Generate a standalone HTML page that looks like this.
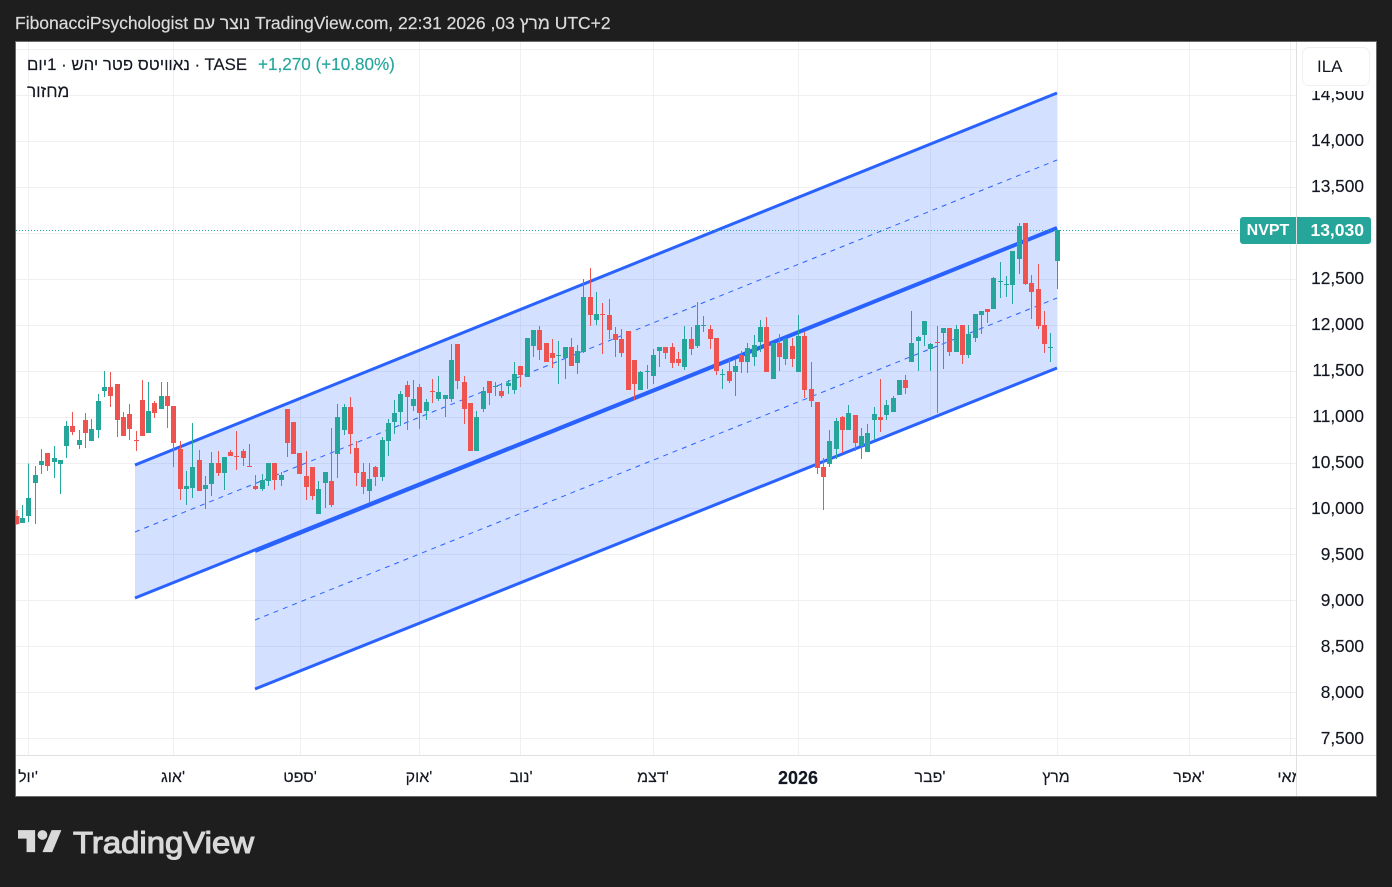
<!DOCTYPE html>
<html lang="he"><head><meta charset="utf-8"><title>NVPT</title>
<style>
html,body{margin:0;padding:0;width:1392px;height:887px;overflow:hidden;background:#1e1e1e}
body{position:relative;font-family:"Liberation Sans","Noto Sans CJK JP",sans-serif}
svg{position:absolute;left:0;top:0}
.t{position:absolute;white-space:pre}
#title{left:15px;top:13px;font-size:17.5px;line-height:20px;color:#dbdbdb;-webkit-text-stroke:.2px #dbdbdb}
.leg{font-size:16.8px;line-height:20px;color:#131722;-webkit-text-stroke:.15px #131722}
.p{position:absolute;left:1296px;width:68px;text-align:right;font-size:17.3px;line-height:20px;color:#131722;-webkit-text-stroke:.15px #131722}
.x{position:absolute;top:768px;width:100px;text-align:center;font-size:16px;line-height:20px;color:#131722;-webkit-text-stroke:.15px #131722}
#cover{position:absolute;left:1297px;top:42px;width:79px;height:49px;background:#fff}
#btn{position:absolute;left:1302px;top:47px;width:66px;height:37px;background:#fff;border:1.5px solid #f0f0f0;border-radius:7px;font-size:17px;line-height:37px;color:#131722;text-indent:14px}
#tag1{position:absolute;left:1240px;top:217px;width:56px;height:27px;background:#26a69a;border-radius:3px 0 0 3px;color:#fff;font-size:16px;font-weight:bold;line-height:27px;text-align:center}
#tag2{position:absolute;left:1297px;top:217px;width:74px;height:27px;background:#26a69a;border-radius:0 3px 3px 0;color:#fff;font-size:17.5px;font-weight:bold;line-height:27px;text-align:right}
#tag2 span{margin-right:7px}
#clip{position:absolute;left:16px;top:760px;width:1280px;height:36px;overflow:hidden}
#clip .x{top:8px}
</style></head><body>
<svg width="1392" height="887" viewBox="0 0 1392 887" xmlns="http://www.w3.org/2000/svg">
<defs><clipPath id="c"><rect x="16" y="42" width="1280" height="713"/></clipPath></defs>
<rect x="15.5" y="41.5" width="1361" height="755" fill="#fff" stroke="#6a6a6a"/>
<g stroke="#f0f0f0" stroke-width="1" fill="none" shape-rendering="crispEdges">
<path d="M16 49.5H1296M16 95.5H1296M16 141.5H1296M16 187.5H1296M16 233.5H1296M16 279.5H1296M16 325.5H1296M16 371.5H1296M16 417.5H1296M16 463.5H1296M16 508.5H1296M16 554.5H1296M16 600.5H1296M16 646.5H1296M16 692.5H1296M16 738.5H1296"/>
<path d="M28.5 42V755M173.5 42V755M300.5 42V755M419.5 42V755M520.5 42V755M653.5 42V755M798.5 42V755M930.5 42V755M1057.5 42V755M1189.5 42V755M1290.5 42V755"/>
</g>
<path d="M1296.5 42V796M16 755.5H1376" stroke="#e0e0e0" stroke-width="1" fill="none" shape-rendering="crispEdges"/>
<polygon points="135,465 1057,93 1057,228 135,598" fill="#2962ff" fill-opacity=".2"/>
<polygon points="255,551 1057,228 1057,368 255,689" fill="#2962ff" fill-opacity=".2"/>
<g stroke="#2962ff" fill="none">
<path d="M135 465L1057 93M135 598L1057 228M255 689L1057 368" stroke-width="3"/>
<path d="M255 551L1057 228" stroke-width="4"/>
<path d="M135 532L1057 160M255 620L1057 298" stroke-width="1" stroke-dasharray="5 5"/>
</g>
<path d="M16 230.5H1240" stroke="#26a69a" stroke-width="1" stroke-dasharray="1 2" fill="none" shape-rendering="crispEdges"/>
<g clip-path="url(#c)" fill="none" shape-rendering="crispEdges">
<g transform="translate(.1667 360) scale(.33333)">
<path stroke="#26a69a" stroke-width="3" d="M67 435V489M85 310V486M106 318V492M124 267V342M163 258V354M181 300V402M199 183V294M238 210V267M274 177V243M295 102V234M313 33V111M445 66V219M484 66V147M559 333V435M577 189V414M616 348V447M634 276V408M673 291V390M787 342V393M805 309V378M844 336V378"/>
<path stroke="#26a69a" stroke-width="15" d="M67 474V489M85 414V468M106 345V369M124 303V315M163 294V306M181 300V312M199 198V258M238 240V255M274 207V243M295 123V210M313 81V93M445 153V219M484 108V147M559 378V387M577 321V384M616 375V387M634 309V372M673 291V339M787 360V387M805 309V363M844 345V360"/>
<path stroke="#ef5350" stroke-width="3" d="M51 450V495M142 279V333M217 156V225M256 159V264M331 36V141M352 72V231M370 156V228M388 132V240M409 213V273M427 60V228M463 123V174M502 66V204M520 138V321M541 243V420M598 270V393M655 273V348M691 270V288M709 213V330M730 267V318M748 252V321M766 345V390M823 309V390M862 147V291M880 186V282M898 279V342"/>
<path stroke="#ef5350" stroke-width="15" d="M51 468V492M142 279V318M217 198V216M256 180V219M331 81V108M352 72V180M370 171V228M388 162V207M409 240V243M427 120V228M463 129V159M502 108V138M520 138V249M541 267V387M598 300V393M655 309V339M691 276V288M709 288V291M730 273V294M748 318V321M766 378V387M823 309V360M862 147V249M880 186V282M898 279V342"/>
</g>
<g transform="translate(280.1667 330) scale(.33333)">
<path stroke="#26a69a" stroke-width="3" d="M115 453V552M136 426V534M172 222V444M193 222V315M268 399V519M307 321V453M325 267V378M343 210V312M361 183V288M400 150V243M439 207V270M475 138V213M496 195V261M514 42V216M589 243V363M610 171V246M646 156V198M685 150V192M703 96V192M742 24V141M760 0V81M835 33V162M856 51V147M892 45V132"/>
<path stroke="#26a69a" stroke-width="15" d="M115 477V552M136 426V459M172 261V372M193 231V300M268 447V483M307 330V441M325 279V333M343 249V276M361 192V246M400 207V228M439 216V243M475 186V207M496 195V207M514 90V207M589 261V363M610 183V237M646 168V171M685 159V168M703 132V180M742 24V141M760 0V48M835 75V78M856 51V84M892 63V99"/>
<path stroke="#ef5350" stroke-width="3" d="M79 363V510M97 411V510M154 294V531M211 201V372M229 333V468M250 399V492M286 408V468M382 153V300M418 162V297M457 147V219M532 42V177M553 138V282M571 219V363M628 153V225M664 159V204M721 108V171M778 -12V90M799 39V96M817 27V114M874 24V108"/>
<path stroke="#ef5350" stroke-width="15" d="M79 438V471M97 411V498M154 453V525M211 231V312M229 354V429M250 426V471M286 411V441M382 165V201M418 171V249M457 183V186M532 42V153M553 156V237M571 219V363M628 153V189M664 183V198M721 108V135M778 0V60M799 39V96M817 69V84M874 51V108"/>
</g>
<g transform="translate(520.1667 260) scale(.33333)">
<path stroke="#26a69a" stroke-width="3" d="M190 57V279M229 96V195M361 333V390M382 315V387M400 267V372M418 261V321M493 198V330M532 126V264M550 168V216M607 327V387M646 297V408M682 249V339M703 225V318M721 180V276M760 249V357M796 234V315"/>
<path stroke="#26a69a" stroke-width="15" d="M190 111V276M229 162V180M361 336V390M382 333V336M400 285V348M418 261V273M493 237V321M532 195V258M550 195V198M607 342V345M646 318V336M682 264V306M703 255V291M721 201V246M760 249V357M796 237V297"/>
<path stroke="#ef5350" stroke-width="3" d="M211 24V198M247 129V282M268 117V237M286 201V291M304 207V291M325 213V390M343 300V420M436 261V297M457 249V324M475 276V318M514 201V285M571 195V267M589 234V345M628 297V369M664 273V339M739 171V336M778 222V333"/>
<path stroke="#ef5350" stroke-width="15" d="M211 111V165M247 162V165M268 165V210M286 222V240M304 237V279M325 213V390M343 300V372M436 261V279M457 261V309M475 297V309M514 237V267M571 207V237M589 234V333M628 333V363M664 285V306M739 201V336M778 249V291"/>
</g>
<g transform="translate(790.1667 300) scale(.33333)">
<path stroke="#26a69a" stroke-width="3" d="M25 45V216M118 390V501M139 354V477M175 315V390M214 384V477M232 372V456M253 321V420M289 300V360M310 288V336M328 240V285M364 33V186M385 108V213M403 63V138M421 129V213M460 84V207M499 75V156"/>
<path stroke="#26a69a" stroke-width="15" d="M25 108V216M118 423V492M139 363V447M175 339V390M214 408V438M232 399V456M253 342V360M289 315V345M310 294V336M328 240V285M364 129V186M385 111V123M403 63V105M421 132V147M460 84V99M499 87V156"/>
<path stroke="#ef5350" stroke-width="3" d="M7 114V201M43 96V294M64 186V321M82 306V522M100 474V630M157 348V459M196 345V453M271 237V396M346 225V282M442 78V339M478 84V168"/>
<path stroke="#ef5350" stroke-width="15" d="M7 138V177M43 108V270M64 267V303M82 306V504M100 501V531M157 351V390M196 345V429M271 351V360M346 240V264M442 126V129M478 84V156"/>
</g>
<g transform="translate(960.1667 210) scale(.33333)">
<path stroke="#26a69a" stroke-width="3" d="M25 345V444M46 312V396M64 303V372M100 201V297M121 156V264M139 198V261M157 123V282M178 39V192M271 369V456M292 60V237"/>
<path stroke="#26a69a" stroke-width="15" d="M25 372V435M46 312V384M64 303V315M100 204V297M121 213V216M139 222V225M157 123V225M178 48V147M271 411V414M292 60V153"/>
<path stroke="#ef5350" stroke-width="3" d="M7 345V462M82 297V339M196 39V225M214 195V327M235 162V357M253 303V429"/>
<path stroke="#ef5350" stroke-width="15" d="M7 345V435M82 297V306M196 39V222M214 219V246M235 237V348M253 345V402"/>
</g>
</g>
<g fill="#d9d9d9" transform="translate(18 825.2) scale(1.222)"><path d="M14 22H7V11H0V4h14v18zM28 22h-8l7.5-18h8L28 22z"/><circle cx="20" cy="8" r="4"/></g>
<text x="73" y="853" font-family="Liberation Sans" font-size="31" fill="#d9d9d9" stroke="#d9d9d9" stroke-width="1.1" textLength="181" lengthAdjust="spacingAndGlyphs">TradingView</text>
</svg>
<div class="t" id="title">FibonacciPsychologist נוצר עם TradingView.com, 22:31 2026 ,03 מרץ UTC+2</div>
<div class="t leg" style="left:27px;top:55px"><span dir="rtl" style="display:inline-block">נאוויטס פטר יהש · 1יום</span> · TASE</div>
<div class="t leg" style="left:258px;top:55px;color:#26a69a;font-size:17.1px;-webkit-text-stroke:.15px #26a69a">+1,270 (+10.80%)</div>
<div class="t leg" style="left:27px;top:81px;font-size:17.2px">מחזור</div>
<div class="p" style="top:84px">14,500</div>
<div class="p" style="top:130px">14,000</div>
<div class="p" style="top:176px">13,500</div>
<div class="p" style="top:268px">12,500</div>
<div class="p" style="top:314px">12,000</div>
<div class="p" style="top:360px">11,500</div>
<div class="p" style="top:406px">11,000</div>
<div class="p" style="top:452px">10,500</div>
<div class="p" style="top:498px">10,000</div>
<div class="p" style="top:544px">9,500</div>
<div class="p" style="top:590px">9,000</div>
<div class="p" style="top:636px">8,500</div>
<div class="p" style="top:682px">8,000</div>
<div class="p" style="top:728px">7,500</div>
<div id="cover"></div>
<div id="btn">ILA</div>
<div id="tag1">NVPT</div>
<div id="tag2"><span>13,030</span></div>
<div id="clip">
<div class="x" style="left:-38px" dir="ltr">יול'</div>
<div class="x" style="left:107px" dir="ltr">אוג'</div>
<div class="x" style="left:234px" dir="ltr">ספט'</div>
<div class="x" style="left:353px" dir="ltr">אוק'</div>
<div class="x" style="left:455px" dir="ltr">נוב'</div>
<div class="x" style="left:587px" dir="ltr">דצמ'</div>
<div class="x" style="left:732px;font-weight:bold;font-size:18px">2026</div>
<div class="x" style="left:864px" dir="ltr">פבר'</div>
<div class="x" style="left:990px">מרץ</div>
<div class="x" style="left:1123px" dir="ltr">אפר'</div>
<div class="x" style="left:1224px">מאי</div>
</div>
</body></html>
